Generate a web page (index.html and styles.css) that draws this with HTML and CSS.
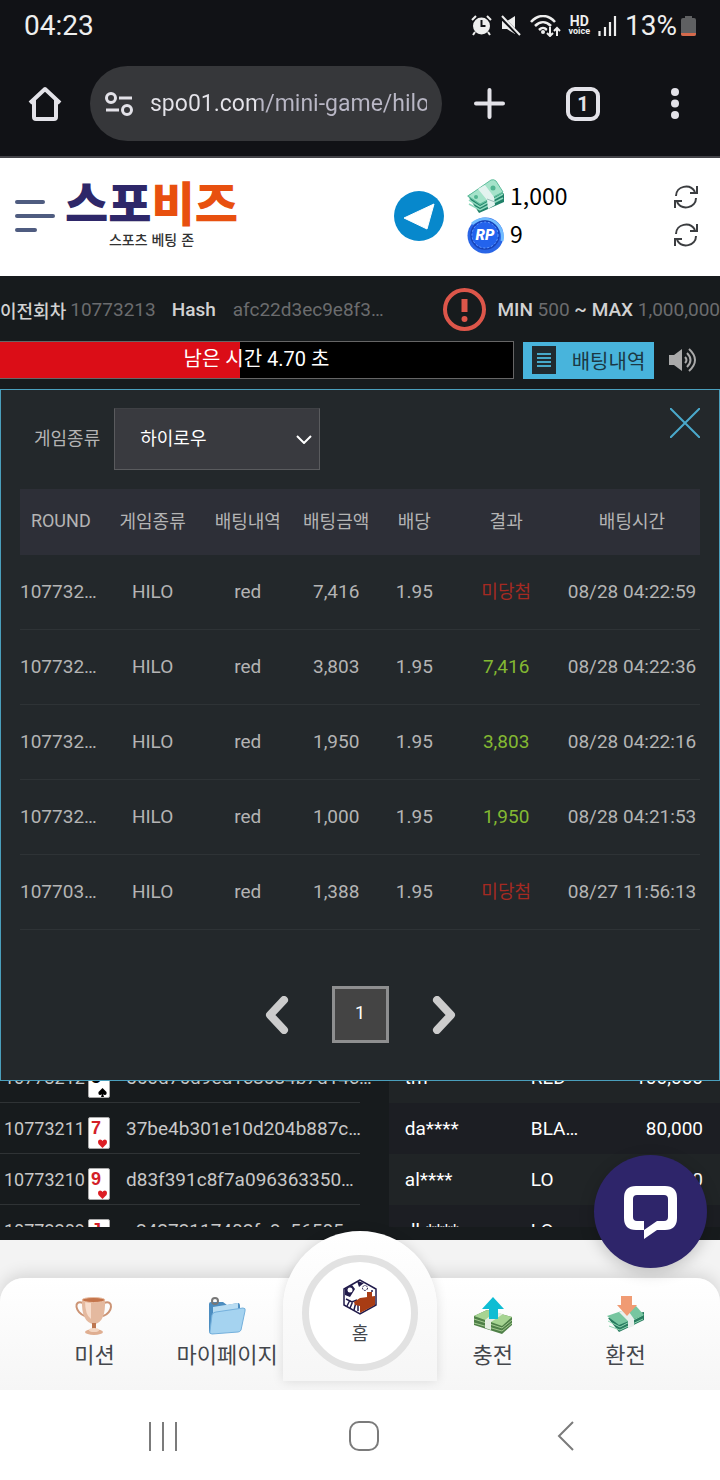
FILE: index.html
```html
<!DOCTYPE html>
<html lang="ko">
  <head>
    <meta charset="utf-8" />
    <meta name="viewport" content="width=device-width" />
    <title>스포비즈</title>
    <link rel="stylesheet" href="styles.css">
  </head>
  <body>
    <div class="browser">
      <div class="status">
        <span class="clock">04:23</span>
        <div class="status-icons">
          <svg width="21" height="21" viewBox="0 0 21 21">
            <path d="M1 5l4-4M20 5l-4-4M4 17l-2 3M17 17l2 3" stroke="#eee" stroke-width="2" />
            <circle cx="10.500" cy="11" r="8.500" fill="#eee" />
            <path d="M10.500 5v6h4" fill="none" stroke="#111216" stroke-width="2" />
          </svg>
          <svg width="22" height="21" viewBox="0 0 22 21">
            <path d="M2 6h5l8-5v18l-8-5H2z" fill="#eee" />
            <path d="M0 1l20 20" stroke="#111216" stroke-width="4" />
            <path d="M2 1l18 19" stroke="#eee" stroke-width="2" />
          </svg>
          <svg width="31" height="22" viewBox="0 0 31 22">
            <g fill="none" stroke="#eee" stroke-width="2.500">
              <path d="M1 7c7-8 17-8 24 0M5 11c5-5 11-5 16 0M9 15c3-3 5-3 8 0" />
            </g>
            <circle cx="13" cy="17" r="2" fill="#eee" />
            <path d="M20 12v9m-3-3l3 3 3-3M27 21v-8m-3 3l3-3 3 3" fill="none" stroke="#111216" stroke-width="5" />
            <path d="M20 12v9m-3-3l3 3 3-3M27 21v-8m-3 3l3-3 3 3" fill="none" stroke="#eee" stroke-width="2" />
          </svg>
          <span class="hd"><b>HD</b><small>voice</small></span>
          <svg class="signal" width="19" height="20" viewBox="0 0 19 20">
            <path d="M1.500 20v-5M7 20v-9M12 20V6M17 20V0" stroke="#eee" stroke-width="2.200" />
          </svg>
          <span class="percent">13%</span>
          <svg width="15" height="20" viewBox="0 0 15 20">
            <path d="M4 0h7v2h2q2 0 2 2v14q0 2-2 2H2q-2 0-2-2V4q0-2 2-2h2z" fill="#5f6062" />
            <path d="M0 17h15v1q0 2-2 2H2q-2 0-2-2z" fill="#d6694b" />
          </svg>
        </div>
      </div>
      <div class="toolbar">
        <button class="tool" aria-label="Home">
          <svg width="34" height="35" viewBox="0 0 34 35" fill="none" stroke="#e3e2e8" stroke-width="4" stroke-linejoin="round">
            <path d="M2 17L17 3l15 14M6 14v17q0 2 2 2h18q2 0 2-2V14" />
          </svg>
        </button>
        <label class="address">
          <svg width="28" height="24" viewBox="0 0 28 24" fill="none" stroke="#e3e2e8" stroke-width="3">
            <circle cx="6" cy="6" r="4.500" />
            <circle cx="22" cy="18" r="4.500" />
            <path d="M14 6h13M1 18h13" />
          </svg>
          <input type="text" value="spo01.com/mini-game/hilo" aria-label="Address" />
        </label>
        <button class="tool wide" aria-label="New tab">
          <svg width="31" height="31" viewBox="0 0 31 31" stroke="#e3e2e8" stroke-width="4" stroke-linecap="round">
            <path d="M15.500 2v27M2 15.500h27" />
          </svg>
        </button>
        <button class="tool wide" aria-label="Tabs"><span class="tabs">1</span></button>
        <button class="tool" aria-label="Menu">
          <svg width="8" height="31" viewBox="0 0 8 31" fill="#e3e2e8">
            <circle cx="4" cy="4" r="4" />
            <circle cx="4" cy="15.500" r="4" />
            <circle cx="4" cy="27" r="4" />
          </svg>
        </button>
      </div>
    </div>

    <header class="site-header">
      <button class="burger" aria-label="메뉴"><i></i><i></i><i></i></button>
      <a href="#" class="logo">
        <span class="logo-name">스포<em>비즈</em></span>
        <span class="logo-sub">스포츠 베팅 존</span>
      </a>
      <a href="#" class="telegram" aria-label="Telegram">
        <svg width="50" height="50" viewBox="0 0 50 50">
          <circle cx="25" cy="25" r="25" fill="#0788cc" />
          <path d="M10 27L40 13 33 38z" fill="#fff" stroke="#fff" stroke-linejoin="round" />
        </svg>
      </a>
      <div class="wallet">
        <div class="balance">
          <svg width="37" height="36" viewBox="0 0 37 36">
            <path d="M1 17L12 34 37 23V15L25 2z" fill="#1f8068" />
            <path d="M2 25l11 6 23-12M2 21l11 7 23-13" fill="none" stroke="#8fd9bd" stroke-width="1.500" />
            <path d="M0 17L13 26 36 14 31 7 12 10z" fill="#59b995" />
            <path d="M1 17L24 1q3-1 5 1l7 11-23 12z" fill="#a5e3ca" stroke="#5fbd9d" />
            <path d="M11 10l7-4 9 12 1 8-7 4-1-9z" fill="#e3f3ef" />
            <path d="M20 20l8 3" stroke="#9cbdb9" />
            <circle cx="26" cy="9" r="2.500" fill="#51b591" />
            <circle cx="9" cy="18" r="2" fill="#51b591" />
          </svg>
          <span>1,000</span>
          <button class="refresh" aria-label="새로고침"><svg width="24" height="24" viewBox="0 0 24 24"><use href="#i-refresh" /></svg></button>
        </div>
        <div class="balance">
          <svg width="37" height="37" viewBox="0 0 37 37">
            <circle cx="18.500" cy="18.500" r="18" fill="#2965e6" />
            <path d="M5 7A18 18 0 0 1 35 24" fill="none" stroke="#71bcff" stroke-width="3" />
            <circle cx="18" cy="18" r="14" fill="#2363ed" stroke="#1743b8" stroke-width="1.500" />
            <circle cx="18" cy="18" r="13" fill="none" stroke="#669dff" stroke-dasharray="2 2" />
            <text x="18" y="23" class="coin-text">RP</text>
          </svg>
          <span>9</span>
          <button class="refresh" aria-label="새로고침"><svg width="24" height="24" viewBox="0 0 24 24"><use href="#i-refresh" /></svg></button>
        </div>
      </div>
    </header>

    <main class="game">
      <div class="info">
        <b class="label">이전회차</b>
        <span class="round">10773213</span>
        <b>Hash</b>
        <span class="hash">afc22d3ec9e8f3…</span>
        <svg class="alert" width="43" height="43" viewBox="0 0 43 43">
          <circle cx="21.500" cy="21.500" r="19.500" fill="none" stroke="#dd564a" stroke-width="4" />
          <path d="M21.500 11v13" stroke="#dd564a" stroke-width="6" />
          <circle cx="21.500" cy="31" r="3" fill="#dd564a" />
        </svg>
        <span class="limits"><b>MIN</b> 500 <b>~ MAX</b> 1,000,000</span>
      </div>

      <div class="timer-row">
        <div class="timer">
          <div class="timer-fill" style="width: 46.7%"></div>
          <span>남은 시간 4.70 초</span>
        </div>
        <button class="history-btn">
          <svg width="24" height="28" viewBox="0 0 24 28">
            <path d="M0 0h24v28H0z" fill="#202a2f" />
            <path d="M5 8h14M5 12h14M5 16h14M5 20h14" stroke="#47a9c9" stroke-width="2" />
          </svg>
          배팅내역
        </button>
        <button class="sound" aria-label="소리">
          <svg width="29" height="24" viewBox="0 0 29 24">
            <path d="M0 7h5l8-6v22l-8-6H0z" fill="#aaa" />
            <path d="M16 9q3 3 0 6M18 5q7 7 0 14M20 1q12 11 0 22" fill="none" stroke="#aaa" stroke-width="2" />
          </svg>
        </button>
      </div>

      <section class="popup">
        <div class="popup-top">
          <label for="gameType">게임종류</label>
          <select id="gameType">
            <option>하이로우</option>
          </select>
          <button class="close" aria-label="닫기">
            <svg width="30" height="30" viewBox="0 0 30 30" stroke="#4aa9cb" stroke-width="2">
              <path d="M0 0l30 30M30 0L0 30" />
            </svg>
          </button>
        </div>

        <table class="bets">
          <colgroup>
            <col class="w12" /><col class="w15" /><col class="w13" /><col class="w13" />
            <col class="w10" /><col class="w17" /><col class="w20" />
          </colgroup>
          <thead>
            <tr>
              <th>ROUND</th>
              <th>게임종류</th>
              <th>배팅내역</th>
              <th>배팅금액</th>
              <th>배당</th>
              <th>결과</th>
              <th>배팅시간</th>
            </tr>
          </thead>
          <tbody>
            <tr>
              <td>107732…</td><td>HILO</td><td>red</td><td>7,416</td><td>1.95</td>
              <td class="lose">미당첨</td><td>08/28 04:22:59</td>
            </tr>
            <tr>
              <td>107732…</td><td>HILO</td><td>red</td><td>3,803</td><td>1.95</td>
              <td class="win">7,416</td><td>08/28 04:22:36</td>
            </tr>
            <tr>
              <td>107732…</td><td>HILO</td><td>red</td><td>1,950</td><td>1.95</td>
              <td class="win">3,803</td><td>08/28 04:22:16</td>
            </tr>
            <tr>
              <td>107732…</td><td>HILO</td><td>red</td><td>1,000</td><td>1.95</td>
              <td class="win">1,950</td><td>08/28 04:21:53</td>
            </tr>
            <tr>
              <td>107703…</td><td>HILO</td><td>red</td><td>1,388</td><td>1.95</td>
              <td class="lose">미당첨</td><td>08/27 11:56:13</td>
            </tr>
          </tbody>
        </table>

        <div class="pages">
          <button aria-label="이전">
            <svg width="24" height="38" viewBox="0 0 24 38"><path d="M19 4L5 19l14 15" /></svg>
          </button>
          <button class="page">1</button>
          <button aria-label="다음">
            <svg width="24" height="38" viewBox="0 0 24 38"><path d="M5 4l14 15L5 34" /></svg>
          </button>
        </div>
      </section>

      <div class="lists">
        <ul class="rounds">
          <li>
            <span>10773212</span>
            <span class="card black">5<svg width="9" height="9" viewBox="0 0 9 9"><use href="#i-spade" /></svg></span>
            <span class="list-hash">560d76d9ed1c8684b7d14c…</span>
          </li>
          <li>
            <span>10773211</span>
            <span class="card">7<svg width="9" height="9" viewBox="0 0 9 9"><use href="#i-heart" /></svg></span>
            <span class="list-hash">37be4b301e10d204b887c…</span>
          </li>
          <li>
            <span>10773210</span>
            <span class="card">9<svg width="9" height="9" viewBox="0 0 9 9"><use href="#i-heart" /></svg></span>
            <span class="list-hash">d83f391c8f7a096363350…</span>
          </li>
          <li>
            <span>10773209</span>
            <span class="card">J<svg width="9" height="9" viewBox="0 0 9 9"><use href="#i-heart" /></svg></span>
            <span class="list-hash">c24273117402fc8c56505…</span>
          </li>
        </ul>
        <ul class="players">
          <li><span>tm****</span><span>RED</span><span>100,000</span></li>
          <li><span>da****</span><span>BLA…</span><span>80,000</span></li>
          <li><span>al****</span><span>LO</span><span>50,000</span></li>
          <li><span>dh****</span><span>LO</span><span>50,000</span></li>
        </ul>
      </div>
    </main>

    <nav class="bottom-nav">
      <button class="chat" aria-label="채팅">
        <svg width="54" height="54" viewBox="0 0 54 54">
          <path fill="#fff" fill-rule="evenodd" d="M12 1h29q12 0 12 12v20q0 12-12 12h-8L20 54v-9h-8Q0 45 0 33V13Q0 1 12 1zM13 10q-4 0-4 4v18q0 4 4 4h7v9l13-9h7q4 0 4-4V14q0-4-4-4z" />
        </svg>
      </button>
      <div class="menu">
        <a href="#">
          <svg width="38" height="40" viewBox="0 0 38 40">
            <path d="M8 7C-2 3 0 17 10 20M29 7c10-4 9 10-1 13" fill="none" stroke="#cc9475" stroke-width="2" />
            <path d="M7 3h23q1 24-11 25Q6 27 7 3z" fill="#e4b99f" />
            <path d="M10 5h6v18q-6-4-6-18z" fill="#f7dccb" />
            <ellipse cx="18.500" cy="4" rx="11.500" ry="2.500" fill="#c4744a" stroke="#e9bea4" />
            <path d="M17 27h4v7h-4z" fill="#bd7650" />
            <ellipse cx="19" cy="36" rx="9" ry="3" fill="#dfae91" />
            <ellipse cx="19" cy="34" rx="5" ry="2" fill="#f3d5c1" />
          </svg>
          미션
        </a>
        <a href="#">
          <svg width="38" height="40" viewBox="0 0 38 40">
            <path d="M1 8q0-2 2-2h12l4 3 11-2q2 0 2 3v20L4 38q-3 0-3-3z" fill="#4c8dc0" />
            <path d="M5 11l25-4v18H5z" fill="#b8dcf2" />
            <path d="M4 19q1-3 4-3l27-4q3 0 2 3l-4 19q-1 2-3 2L4 38q-3 0-2-3z" fill="#a5d3f0" stroke="#74b0dc" />
            <circle cx="7" cy="5" r="3" fill="none" stroke="#777" stroke-width="2" />
          </svg>
          마이페이지
        </a>
        <div></div>
        <a href="#">
          <svg width="38" height="40" viewBox="0 0 38 40">
            <path d="M0 20v9l28 9 10-9v-8L13 14z" fill="#4f8048" />
            <path d="M0 23l28 9 10-8M0 27l28 8 10-8" fill="none" stroke="#a4cb91" />
            <path d="M0 20l13-6 25 7-10 9z" fill="#a6d492" />
            <path d="M11 24l10-8 8 2-12 8v8l-6-2z" fill="#e5eee2" />
            <path d="M19 1l11 12h-6v10h-9V13H8z" fill="#0fbdd3" />
          </svg>
          충전
        </a>
        <a href="#">
          <svg width="38" height="40" viewBox="0 0 38 40">
            <path d="M1 22l11 14 25-12v-8z" fill="#277b5f" />
            <path d="M1 25l12 6 23-12M2 30l11 4 23-11" fill="none" stroke="#92d6b2" />
            <path d="M0 20l29-10 8 9-25 10z" fill="#77c6a0" />
            <path d="M12 16l8-3 7 10v7l-6 2v-7z" fill="#e8efec" />
            <path d="M14 0h11v9h5L20 20 10 9h4z" fill="#f09b73" />
          </svg>
          환전
        </a>
      </div>
      <div class="home-tab">
        <a href="#" class="home-ring">
          <svg width="34" height="36" viewBox="0 0 34 36">
            <path d="M17 1L1 10v16l16 9 16-9V10z" fill="#fff" stroke="#211b4b" stroke-width="1.500" />
            <path d="M17 19L32 17v9l-15 8z" fill="#a83c14" />
            <path d="M24 18v-5h5v5z" fill="#a83c14" />
            <path d="M2 10l7-4 3 4-5 8-5-2zM14 2l7 2-5 4z" fill="#211b4b" />
            <circle cx="7" cy="11" r="2.500" fill="#fff" />
            <path d="M3 20l6 3 5-2M4 27l3-6M7 29l3-7M11 31l2-8M15 32V21" fill="none" stroke="#211b4b" stroke-width="1.500" />
            <circle cx="22" cy="9" r="2.500" fill="none" stroke="#211b4b" stroke-dasharray="2 1" />
            <circle cx="29" cy="12" r="1" fill="#211b4b" />
            <path d="M11 23l6-4v8l-5-1z" fill="#a83c14" />
          </svg>
          홈
        </a>
      </div>
    </nav>

    <div class="system-nav">
      <button aria-label="Recent apps"><svg width="28" height="29" viewBox="0 0 28 29"><path d="M1 0v29M14 0v29M27 0v29" /></svg></button>
      <button aria-label="Home screen"><svg width="30" height="30" viewBox="0 0 30 30"><rect x="1" y="1" width="28" height="28" rx="9" /></svg></button>
      <button aria-label="Back"><svg width="17" height="30" viewBox="0 0 17 30"><path d="M16 1L2 15l14 14" /></svg></button>
    </div>

    <svg class="sprites">
      <symbol id="i-refresh" viewBox="0 0 24 24">
        <g fill="none" stroke="#3b3d40" stroke-width="2">
          <path d="M2 11C2 1 16-2 21 7M23 1v7h-7M22 13c0 10-14 13-19 4M1 23v-7h7" />
        </g>
      </symbol>
      <symbol id="i-heart" viewBox="0 0 9 9">
        <path d="M4.500 9L.5 5Q-1 1 2 .5q2 0 2.500 1.500Q5 .5 7 .5 10 1 8.500 5z" fill="#dd1e24" />
      </symbol>
      <symbol id="i-spade" viewBox="0 0 9 9">
        <path d="M4.500 0l4 4Q9 7 7 7 5.500 7 5 6l1 3H3l1-3Q3.500 7 2 7 0 7 .5 4z" fill="#000" />
      </symbol>
    </svg>
  </body>
</html>
```

FILE: styles.css
```css
* {
  box-sizing: border-box;
}

body {
  margin: 0;
  background-color: #fff;
  color: #fff;
  font-family: Roboto, "Noto Sans CJK KR", sans-serif;
  font-size: 18px;
}

button {
  display: flex;
  align-items: center;
  justify-content: center;
  padding: 0;
  border: 0;
  background: none;
  color: inherit;
  font: inherit;
  cursor: pointer;
}

a {
  color: inherit;
  text-decoration: none;
}

svg {
  display: block;
  flex: none;
}

ul {
  list-style: none;
  margin: 0;
  padding: 0;
}

.sprites {
  display: none;
}

/* browser bar */

.browser {
  background-color: #111216;
  border-bottom: 2px solid #434348;
}

.status {
  display: flex;
  justify-content: space-between;
  align-items: center;
  height: 51px;
  padding: 0 24px;
  color: #eee;
}

.clock,
.percent {
  font-size: 28px;
}

.status-icons {
  display: flex;
  align-items: center;
  gap: 8px;
}

.hd {
  display: flex;
  flex-direction: column;
  align-items: center;
  font-size: 14px;
  line-height: 12px;
}

.hd small {
  font-size: 9px;
  font-weight: bold;
  line-height: 9px;
}

.percent + svg {
  margin-left: -4px;
}

.toolbar {
  display: flex;
  align-items: center;
  height: 105px;
}

.tool {
  width: 90px;
  height: 75px;
}

.tool.wide {
  width: 94px;
}

.address {
  flex: 1;
  min-width: 0;
  display: flex;
  align-items: center;
  gap: 17px;
  height: 75px;
  padding: 0 15px;
  border-radius: 38px;
  background-color: #36373a;
}

.address input {
  flex: 1;
  min-width: 0;
  padding: 0;
  border: 0;
  font-family: Roboto, sans-serif;
  font-size: 23px;
  background: linear-gradient(90deg, #e4e3e9 106px, #b9b7c5 106px);
  -webkit-background-clip: text;
  background-clip: text;
  color: transparent;
}

.tabs {
  width: 34px;
  height: 34px;
  border: 4px solid #e3e2e8;
  border-radius: 9px;
  font-size: 20px;
  font-weight: bold;
  line-height: 26px;
  color: #e3e2e8;
}

/* site header */

.site-header {
  display: flex;
  align-items: center;
  height: 118px;
  padding: 0 22px 2px 15px;
  background-color: #fff;
  color: #000;
  font-family: "Noto Sans CJK KR", sans-serif;
}

.burger {
  flex-direction: column;
  align-items: flex-start;
  gap: 10px;
  width: 40px;
}

.burger i {
  width: 30px;
  height: 4px;
  border-radius: 2px;
  background-color: #4f5c80;
}

.burger i:nth-child(2) {
  width: 40px;
}

.burger i:nth-child(3) {
  width: 22px;
}

.logo {
  display: flex;
  flex-direction: column;
  align-items: center;
  margin-left: 10px;
  padding-bottom: 8px;
}

.logo-name {
  font-size: 47px;
  font-weight: 900;
  line-height: 54px;
  color: #2e2769;
}

.logo-name em {
  font-style: normal;
  color: #e8500f;
}

.logo-sub {
  font-size: 14px;
  font-weight: 500;
  line-height: 22px;
  color: #333;
}

.telegram {
  margin-left: auto;
  margin-right: 23px;
}

.wallet {
  width: 231px;
}

.balance {
  display: flex;
  align-items: center;
  gap: 6px;
  height: 38px;
  font-size: 23px;
}

.balance span {
  padding-bottom: 4px;
}

.refresh {
  margin-left: auto;
}

.coin-text {
  fill: #fff;
  font-family: Roboto, sans-serif;
  font-size: 15px;
  font-style: italic;
  font-weight: 900;
  text-anchor: middle;
}

/* game */

.game {
  padding-bottom: 13px;
  background-color: #171b1d;
}

.info {
  display: flex;
  align-items: center;
  height: 65px;
  padding-top: 2px;
  font-size: 19px;
  white-space: nowrap;
  color: #6b6c6e;
}

.info b {
  font-weight: 500;
  color: #d2d2d2;
}

.info .label {
  font-size: 18px;
}

.round {
  margin: 0 16px 0 4px;
}

.hash {
  margin-left: 17px;
}

.alert {
  margin-left: auto;
}

.limits {
  margin-left: 11px;
}

.timer-row {
  display: flex;
  align-items: center;
  height: 38px;
  margin-bottom: 10px;
  padding-right: 22px;
}

.timer {
  flex: 1;
  display: grid;
  height: 38px;
  border: 1px solid #666;
  border-left: 0;
  background-color: #000;
  font-size: 20px;
  line-height: 34px;
  text-align: center;
}

.timer-fill,
.timer span {
  grid-area: 1 / 1;
}

.timer-fill {
  background-color: #db0d17;
}

.history-btn {
  gap: 16px;
  width: 131px;
  height: 37px;
  margin: 0 15px 0 9px;
  background-color: #48b4dc;
  color: #1b3844;
  font-size: 20px;
}

.popup {
  position: relative;
  z-index: 1;
  margin-bottom: -29px;
  padding: 18px 19px 37px;
  border: 1px solid #4a9fbc;
  background-color: #23282b;
  color: #b4b4b4;
}

.popup-top {
  display: flex;
  align-items: center;
  margin-bottom: 19px;
  padding-left: 14px;
}

.popup-top label {
  padding-bottom: 4px;
}

.popup-top select {
  appearance: none;
  width: 206px;
  height: 62px;
  margin-left: 14px;
  padding: 0 25px 2px;
  border: 1px solid #5a5b5e;
  border-top-color: #3f4145;
  border-radius: 0;
  background: #393a3f url("data:image/svg+xml,%3Csvg xmlns='http://www.w3.org/2000/svg' width='16' height='9'%3E%3Cpath d='M1 1l7 7 7-7' fill='none' stroke='%23fff' stroke-width='2'/%3E%3C/svg%3E") no-repeat right 7px center;
  color: #fff;
  font: inherit;
}

.close {
  align-self: flex-start;
  margin-left: auto;
}

.bets {
  width: 100%;
  table-layout: fixed;
  border-spacing: 0;
  text-align: center;
  white-space: nowrap;
}

.w10 { width: 10%; }
.w12 { width: 12%; }
.w13 { width: 13%; }
.w15 { width: 15%; }
.w17 { width: 17%; }
.w20 { width: 20%; }

.bets th,
.bets td {
  padding: 0;
}

.bets th {
  height: 66px;
  padding-bottom: 4px;
  background-color: #2d2f37;
  font-weight: normal;
}

.bets td {
  height: 75px;
  padding-bottom: 2px;
  border-bottom: 1px solid #2e3336;
  font-size: 19px;
}

.bets td:first-child {
  text-align: left;
}

.bets .lose {
  padding-bottom: 4px;
  color: #a52a22;
  font-size: 18px;
}

.bets .win {
  color: #83b932;
}

.pages {
  display: flex;
  justify-content: center;
  align-items: center;
  gap: 43px;
  margin-top: 56px;
}

.pages path {
  fill: none;
  stroke: #ccc;
  stroke-width: 8;
  stroke-linecap: round;
  stroke-linejoin: round;
}

.page {
  width: 57px;
  height: 57px;
  padding-bottom: 4px;
  border: 3px solid #8e8f90;
  background-color: #444;
  color: #fff;
}

.lists {
  display: flex;
  justify-content: space-between;
  align-items: flex-start;
  height: 175px;
  overflow: hidden;
}

.rounds {
  width: 50%;
  color: #c8c8c8;
}

.rounds li {
  display: grid;
  grid-template-columns: 84px 38px 1fr;
  align-items: center;
  height: 51px;
  padding-left: 4px;
  border-bottom: 1px solid #2f3335;
}

.list-hash {
  font-size: 19px;
}

.card {
  display: flex;
  flex-direction: column;
  width: 22px;
  height: 32px;
  margin-top: 9px;
  padding: 1px 2px;
  border: 1px solid #aaa;
  border-radius: 2px;
  background-color: #fff;
  color: #d32027;
  font-family: "Liberation Sans", sans-serif;
  font-size: 18px;
  font-weight: bold;
  line-height: 18px;
}

.card.black {
  color: #000;
}

.card svg {
  align-self: flex-end;
  margin-top: 2px;
}

.players {
  width: 46%;
  font-size: 19px;
}

.players li {
  display: flex;
  align-items: center;
  height: 51px;
  padding: 0 17px 0 16px;
  background-color: #202426;
}

.players li:nth-child(even) {
  background-color: #1c1e23;
}

.players span:first-child {
  width: 126px;
}

.players span:last-child {
  margin-left: auto;
}

/* bottom menu */

.bottom-nav {
  position: relative;
  padding-top: 38px;
  background-color: #f3f3f3;
  color: #44474c;
}

.menu {
  display: grid;
  grid-template-columns: repeat(5, 1fr);
  height: 112px;
  padding: 18px 28px 0;
  border-radius: 24px 24px 0 0;
  background: linear-gradient(#fff, #f6f6f6);
  box-shadow: 0 -4px 16px rgba(0, 0, 0, 0.12);
}

.menu a {
  display: flex;
  flex-direction: column;
  align-items: center;
  font-size: 22px;
  line-height: 40px;
  white-space: nowrap;
}

.home-tab {
  position: absolute;
  top: -9px;
  left: 50%;
  width: 154px;
  height: 150px;
  margin-left: -77px;
  padding: 24px 19px 0;
  border-radius: 77px 77px 0 0;
  background: linear-gradient(#fff, #f6f6f6);
  box-shadow: 0 0 12px rgba(0, 0, 0, 0.12);
}

.home-ring {
  display: flex;
  flex-direction: column;
  align-items: center;
  height: 116px;
  padding-top: 17px;
  border: 7px solid #e2e2e2;
  border-radius: 50%;
  background-color: #fff;
  line-height: 38px;
}

.chat {
  position: absolute;
  top: -85px;
  right: 13px;
  z-index: 2;
  width: 113px;
  height: 113px;
  border-radius: 50%;
  background-color: #2e256a;
  box-shadow: 0 4px 16px rgba(0, 0, 0, 0.2);
}

/* android buttons */

.system-nav {
  position: relative;
  display: grid;
  grid-template-columns: repeat(3, 1fr);
  height: 90px;
  padding: 2px 54px 0 62px;
  background-color: #fff;
}

.system-nav svg {
  fill: none;
  stroke: #7b7b7b;
  stroke-width: 2;
}
```
